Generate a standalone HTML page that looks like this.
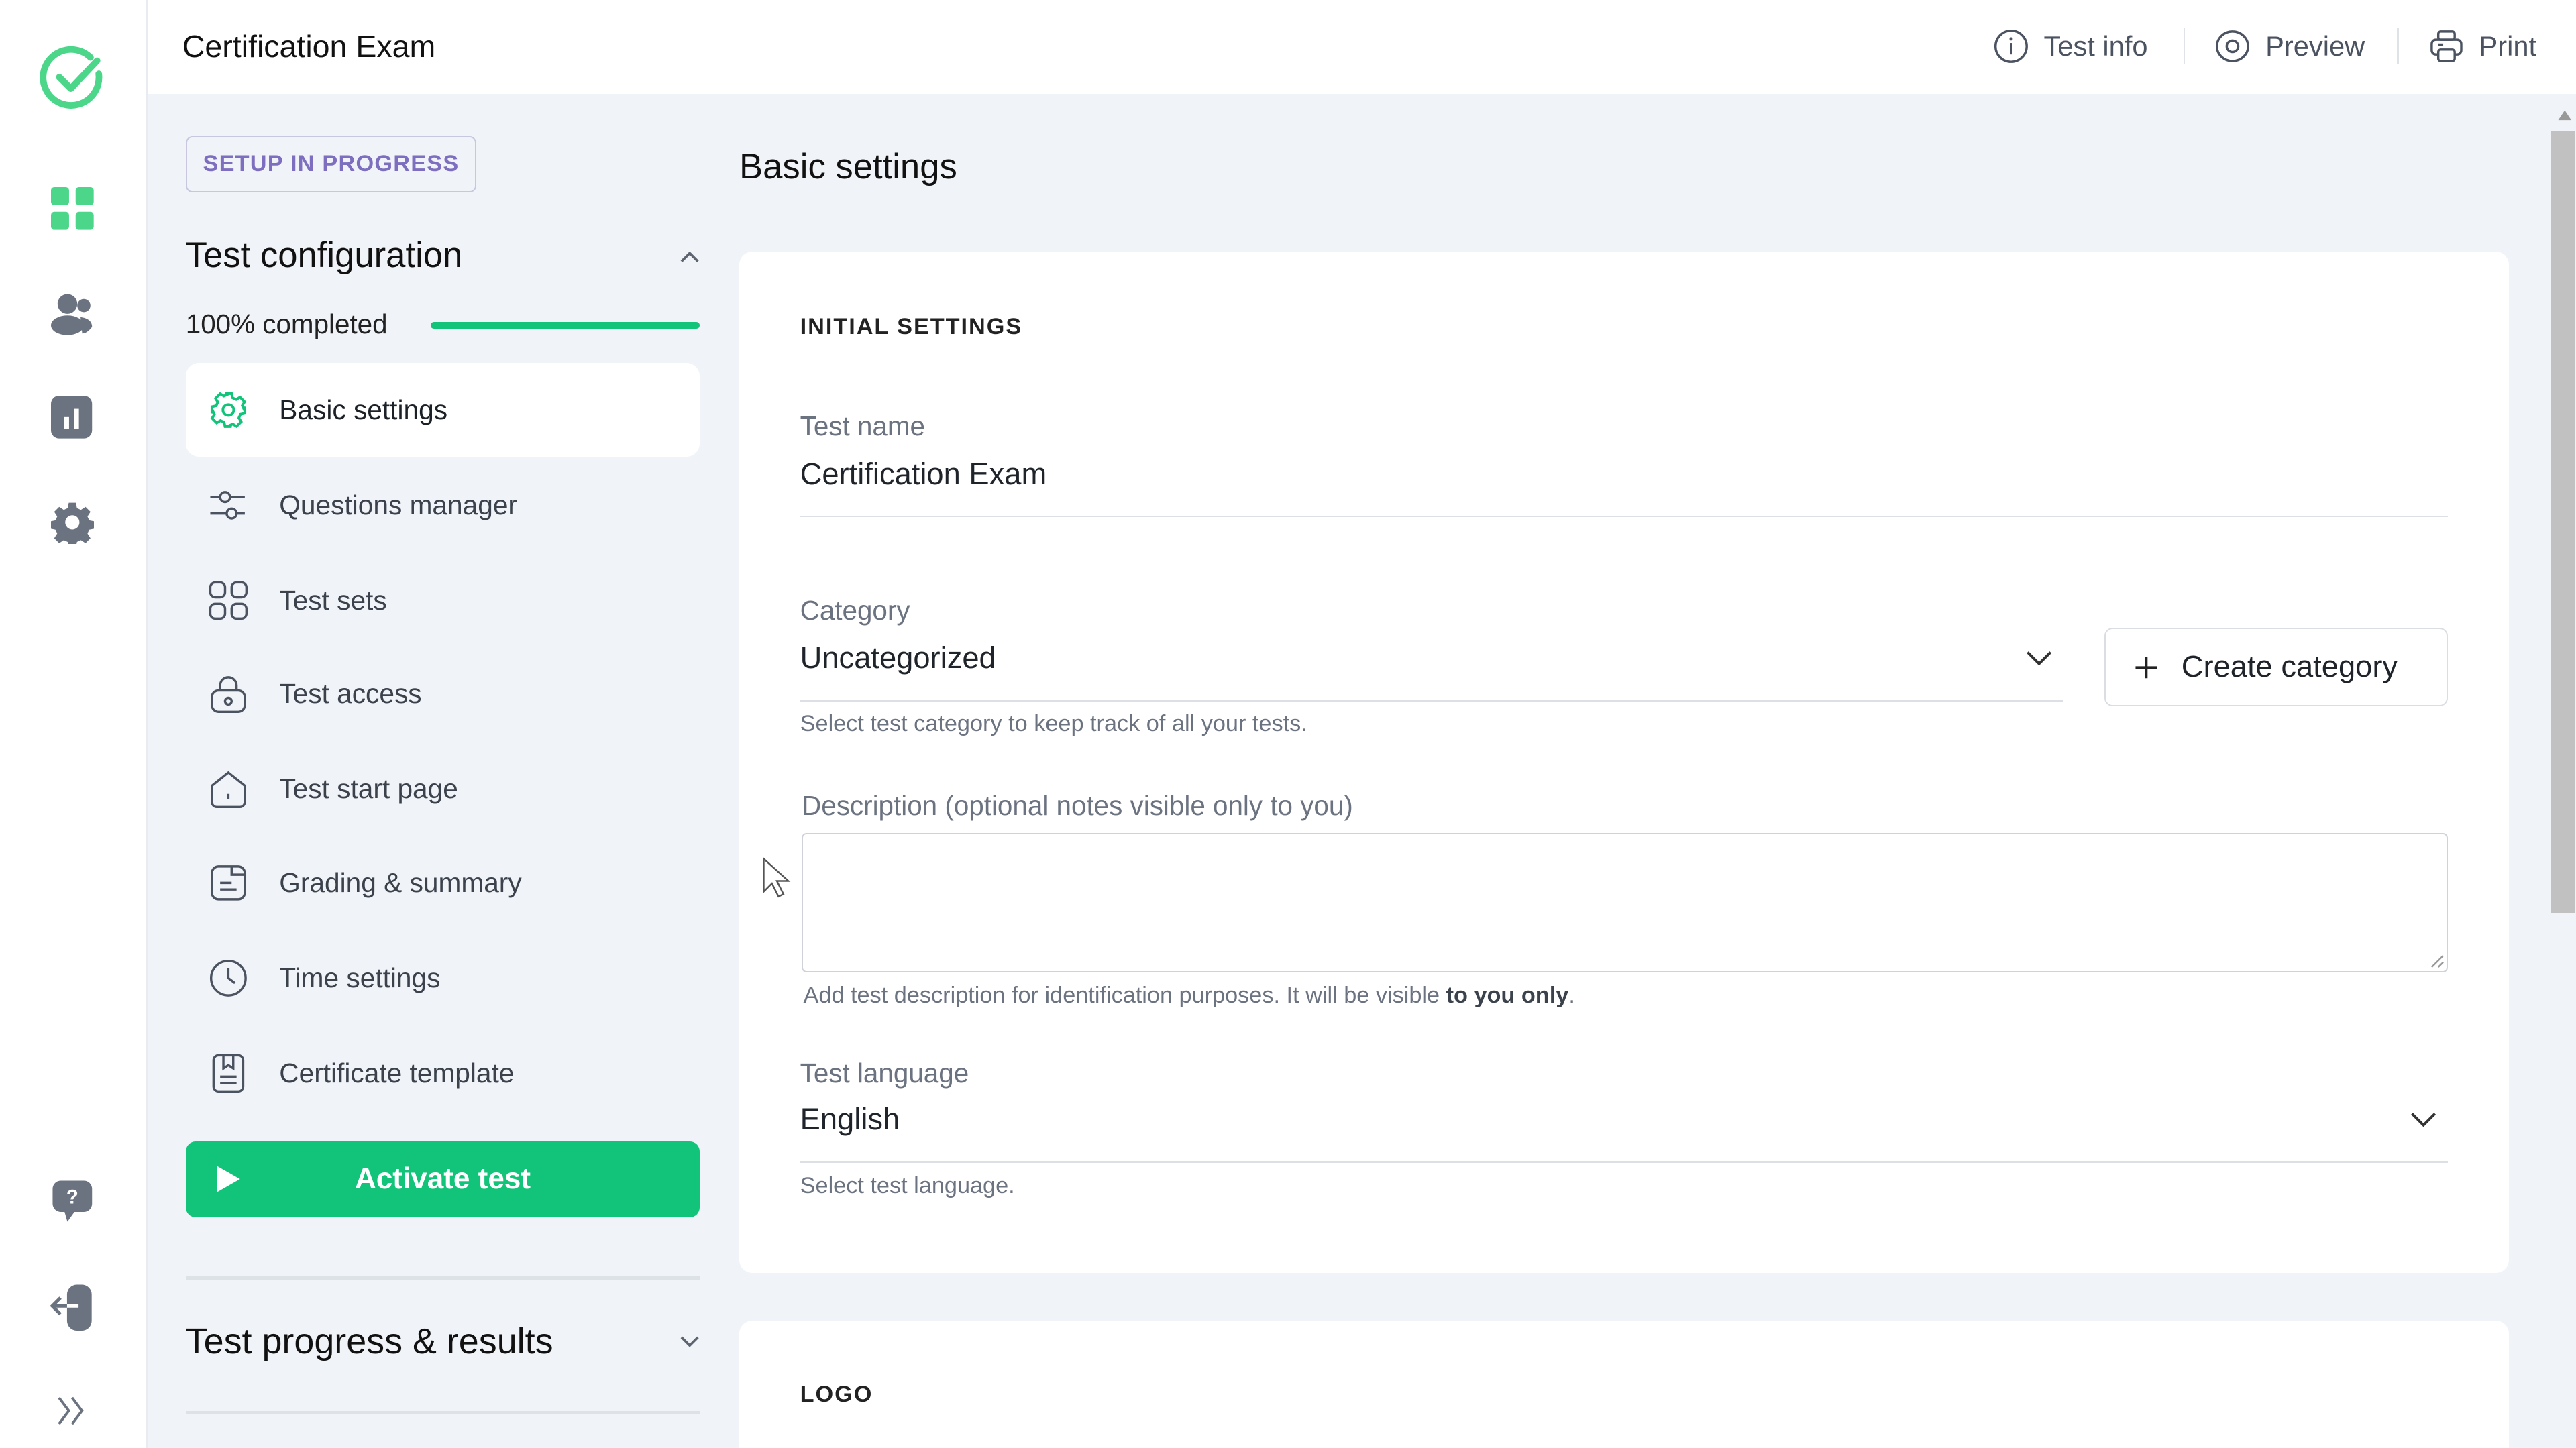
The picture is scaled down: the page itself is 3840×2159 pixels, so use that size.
<!DOCTYPE html>
<html><head><meta charset="utf-8"><style>
*{box-sizing:border-box;margin:0;padding:0}
html,body{width:3840px;height:2159px;overflow:hidden;background:#f0f3f7}
#w{width:1568px;height:882px;zoom:2.449;position:relative;font-family:"Liberation Sans",sans-serif;color:#1c2127;background:#f0f3f7;overflow:hidden}
.a{position:absolute}
.rail{left:0;top:0;width:90px;height:882px;background:#fff;border-right:1px solid #e8ebef}
.top{left:90px;top:0;width:1478px;height:57px;background:#fff}
.tr{font-size:17px;color:#4b5361;display:flex;align-items:center;gap:9px}
.sep{width:1px;height:22px;background:#dfe3e7;top:17px}
.item{left:113px;width:313px;height:57px;display:flex;align-items:center;font-size:16.6px;color:#3b424c}
.item svg{margin-left:14px;margin-right:19px}
.lbl{font-size:16.5px;color:#6b7280}
.val{font-size:18.5px;color:#1f242b}
.help{font-size:14px;color:#6b7280}
.ul{height:1px;background:#dcdfe3}
</style></head><body><div id="w">
<div class="a rail"></div>
<svg class="a" style="left:24px;top:27px" width="40" height="40" viewBox="0 0 40 40"><path d="M31 8 A17 17 0 1 0 36 18" fill="none" stroke="#4cd68a" stroke-width="4" stroke-linecap="round"/><path d="M12 20 l7 7 l16 -17" fill="none" stroke="#4cd68a" stroke-width="4" stroke-linecap="round" stroke-linejoin="round"/></svg>
<svg class="a" style="left:31px;top:114px" width="26" height="26"><rect x="0" y="0" width="11" height="11" rx="2" fill="#4cd68a"/><rect x="15" y="0" width="11" height="11" rx="2" fill="#4cd68a"/><rect x="0" y="15" width="11" height="11" rx="2" fill="#4cd68a"/><rect x="15" y="15" width="11" height="11" rx="2" fill="#4cd68a"/></svg>
<svg class="a" style="left:31px;top:178px" width="26" height="26"><circle cx="10" cy="7" r="6" fill="#6b7380"/><circle cx="20" cy="8" r="4" fill="#6b7380"/><ellipse cx="10" cy="20" rx="10" ry="6" fill="#6b7380"/><path d="M18 15 q7 1 7 6 q-3 4 -6 4z" fill="#6b7380"/></svg>
<svg class="a" style="left:31px;top:241px" width="26" height="26"><rect x="0" y="0" width="25" height="26" rx="5" fill="#6b7380"/><rect x="8" y="13" width="3" height="7" fill="#fff"/><rect x="14" y="8" width="3" height="12" fill="#fff"/></svg>
<svg class="a" style="left:31px;top:305px" width="26" height="26" viewBox="0 0 24 24"><path fill="#6b7380" d="M10 1h4l.6 3 2.2 1 2.6-1.7 2.8 2.8-1.7 2.6 1 2.2 3 .6v4l-3 .6-1 2.2 1.7 2.6-2.8 2.8-2.6-1.7-2.2 1-.6 3h-4l-.6-3-2.2-1-2.6 1.7-2.8-2.8 1.7-2.6-1-2.2-3-.6v-4l3-.6 1-2.2-1.7-2.6 2.8-2.8 2.6 1.7 2.2-1zM12 8a4 4 0 1 0 0 8a4 4 0 1 0 0-8z"/></svg>
<svg class="a" style="left:31px;top:718px" width="26" height="28"><rect x="1" y="1" width="24" height="19" rx="5" fill="#6b7380"/><path d="M8 19 l2 7 l5 -7z" fill="#6b7380"/><text x="13" y="15" font-size="12" font-weight="bold" fill="#fff" text-anchor="middle" font-family="Liberation Sans">?</text></svg>
<svg class="a" style="left:30px;top:781px" width="28" height="30"><rect x="11" y="1" width="15" height="28" rx="6" fill="#6b7380"/><path d="M3 14h15M7 9l-5 5 5 5" stroke="#6b7380" stroke-width="2" fill="none"/><path d="M11 14h7" stroke="#fff" stroke-width="2"/></svg>
<svg class="a" style="left:34px;top:849px" width="20" height="20"><path d="M2 2l6 8-6 8M10 2l6 8-6 8" stroke="#6b7380" stroke-width="1.6" fill="none"/></svg>

<div class="a top"></div>
<div class="a" style="left:111px;top:17px;font-size:19px;color:#111">Certification Exam</div>
<div class="a tr" style="left:1213px;top:17px"><svg width="22" height="22"><circle cx="11" cy="11" r="9.5" fill="none" stroke="#4b5361" stroke-width="1.4"/><path d="M11 9v7" stroke="#4b5361" stroke-width="1.5"/><circle cx="11" cy="6.5" r="1" fill="#4b5361"/></svg>Test info</div>
<div class="a sep" style="left:1329px"></div>
<div class="a tr" style="left:1348px;top:17px"><svg width="22" height="22"><ellipse cx="11" cy="11" rx="9.5" ry="9" fill="none" stroke="#4b5361" stroke-width="1.4"/><circle cx="11" cy="11" r="3.5" fill="none" stroke="#4b5361" stroke-width="1.4"/></svg>Preview</div>
<div class="a sep" style="left:1459px"></div>
<div class="a tr" style="left:1478px;top:17px"><svg width="22" height="22"><rect x="6" y="2" width="10" height="5" rx="1.5" fill="none" stroke="#4b5361" stroke-width="1.4"/><rect x="2" y="7" width="18" height="9" rx="2.5" fill="none" stroke="#4b5361" stroke-width="1.4"/><rect x="6" y="13" width="10" height="7" rx="1.5" fill="#fff" stroke="#4b5361" stroke-width="1.4"/><path d="M6 10h3" stroke="#4b5361" stroke-width="1.4"/></svg>Print</div>

<div class="a" style="left:113px;top:83px;width:177px;height:34px;border:1px solid #c9c7df;border-radius:4px;color:#7d6ebf;font-size:14px;font-weight:bold;letter-spacing:.5px;line-height:32px;text-align:center">SETUP IN PROGRESS</div>
<div class="a" style="left:113px;top:143px;font-size:21.5px;color:#111">Test configuration</div>
<svg class="a" style="left:413px;top:151px" width="14" height="10"><path d="M2 8l5-5 5 5" stroke="#5b6470" stroke-width="1.5" fill="none"/></svg>
<div class="a" style="left:113px;top:188px;font-size:16.5px;color:#222">100% completed</div>
<div class="a" style="left:262px;top:196px;width:164px;height:4px;border-radius:2px;background:#12c47a"></div>

<div class="a item" style="top:221px;background:#fff;border-radius:8px;color:#1c2127"><svg width="24" height="24" viewBox="0 0 24 24"><path fill="none" stroke="#12c47a" stroke-width="1.6" d="M10 2h4l.6 2.6 2.2 1 2.3-1.4 2.8 2.8-1.4 2.3 1 2.2L22 10v4l-2.6.6-1 2.2 1.4 2.3-2.8 2.8-2.3-1.4-2.2 1L14 22h-4l-.6-2.6-2.2-1-2.3 1.4-2.8-2.8 1.4-2.3-1-2.2L2 14v-4l2.6-.6 1-2.2-1.4-2.3 2.8-2.8 2.3 1.4 2.2-1z"/><circle cx="12" cy="12" r="3.3" fill="none" stroke="#12c47a" stroke-width="1.6"/></svg>Basic settings</div>
<div class="a item" style="top:279px"><svg width="24" height="24"><circle cx="10" cy="7" r="3" fill="none" stroke="#4b5361" stroke-width="1.4"/><circle cx="14" cy="17" r="3" fill="none" stroke="#4b5361" stroke-width="1.4"/><path d="M1 7h6M13 7h9M1 17h10M17 17h5" stroke="#4b5361" stroke-width="1.4"/></svg>Questions manager</div>
<div class="a item" style="top:337px"><svg width="24" height="24" fill="none" stroke="#4b5361" stroke-width="1.4"><rect x="1" y="1" width="9" height="9" rx="3"/><rect x="14" y="1" width="9" height="9" rx="3"/><rect x="1" y="14" width="9" height="9" rx="3"/><rect x="14" y="14" width="9" height="9" rx="3"/></svg>Test sets</div>
<div class="a item" style="top:394px"><svg width="24" height="24" fill="none" stroke="#4b5361" stroke-width="1.4"><path d="M7 10V7a5 5 0 0 1 10 0v3"/><rect x="2" y="10" width="20" height="13" rx="4"/><circle cx="12" cy="16.5" r="2"/></svg>Test access</div>
<div class="a item" style="top:452px"><svg width="24" height="24" fill="none" stroke="#4b5361" stroke-width="1.4"><path d="M2 10l10-8 10 8v10a3 3 0 0 1-3 3H5a3 3 0 0 1-3-3z"/><path d="M12 15v3"/></svg>Test start page</div>
<div class="a item" style="top:509px"><svg width="24" height="24" fill="none" stroke="#4b5361" stroke-width="1.4"><rect x="2" y="2" width="20" height="20" rx="4"/><path d="M7 12h7M7 16h10M14 2v5h8"/></svg>Grading &amp; summary</div>
<div class="a item" style="top:567px"><svg width="24" height="24" fill="none" stroke="#4b5361" stroke-width="1.4"><circle cx="12" cy="12" r="10.5"/><path d="M12 6v6l4 3"/></svg>Time settings</div>
<div class="a item" style="top:625px"><svg width="24" height="24" fill="none" stroke="#4b5361" stroke-width="1.4"><rect x="3" y="1" width="18" height="22" rx="3"/><path d="M9 1v8l3-2 3 2V1M7 14h10M7 18h10"/></svg>Certificate template</div>

<div class="a" style="left:113px;top:695px;width:313px;height:46px;background:#12c47a;border-radius:6px;color:#fff;font-size:18px;font-weight:bold;text-align:center;line-height:46px">Activate test</div>
<svg class="a" style="left:131px;top:709px" width="16" height="18"><path d="M1 1l14 8-14 8z" fill="#fff"/></svg>
<div class="a ul" style="left:113px;top:777px;width:313px;height:2px;background:#dde2e6"></div>
<div class="a" style="left:113px;top:804px;font-size:22px;color:#111">Test progress &amp; results</div>
<svg class="a" style="left:413px;top:812px" width="14" height="10"><path d="M2 2l5 5 5-5" stroke="#5b6470" stroke-width="1.5" fill="none"/></svg>
<div class="a ul" style="left:113px;top:859px;width:313px;height:2px;background:#dde2e6"></div>

<div class="a" style="left:450px;top:89px;font-size:21.5px;color:#111">Basic settings</div>
<div class="a" style="left:450px;top:153px;width:1077px;height:622px;background:#fff;border-radius:8px"></div>
<div class="a" style="left:487px;top:191px;font-size:14px;font-weight:bold;letter-spacing:.8px;color:#222">INITIAL SETTINGS</div>
<div class="a lbl" style="left:487px;top:250px">Test name</div>
<div class="a val" style="left:487px;top:278px">Certification Exam</div>
<div class="a ul" style="left:487px;top:314px;width:1003px"></div>
<div class="a lbl" style="left:487px;top:362px">Category</div>
<div class="a val" style="left:487px;top:390px">Uncategorized</div>
<svg class="a" style="left:1233px;top:396px" width="16" height="10"><path d="M1 1l7 7 7-7" stroke="#333" stroke-width="1.6" fill="none"/></svg>
<div class="a ul" style="left:487px;top:426px;width:769px"></div>
<div class="a" style="left:1281px;top:382px;width:209px;height:48px;border:1px solid #dadde2;border-radius:5px;font-size:18.5px;color:#1f242b;line-height:46px;padding-left:46px">Create category</div>
<svg class="a" style="left:1299px;top:399px" width="15" height="15"><path d="M7.5 1v13M1 7.5h13" stroke="#222" stroke-width="1.6"/></svg>
<div class="a help" style="left:487px;top:433px">Select test category to keep track of all your tests.</div>
<div class="a lbl" style="left:488px;top:481px">Description (optional notes visible only to you)</div>
<div class="a" style="left:488px;top:507px;width:1002px;height:85px;border:1px solid #cfd3d9;border-radius:3px"></div>
<svg class="a" style="left:1478px;top:580px" width="10" height="10"><path d="M9 2L2 9M9 6L6 9" stroke="#999" stroke-width="1"/></svg>
<div class="a help" style="left:489px;top:598px">Add test description for identification purposes. It will be visible <b style="color:#3b424c">to you only</b>.</div>
<div class="a lbl" style="left:487px;top:644px">Test language</div>
<div class="a val" style="left:487px;top:671px">English</div>
<svg class="a" style="left:1467px;top:677px" width="16" height="10"><path d="M1 1l7 7 7-7" stroke="#333" stroke-width="1.6" fill="none"/></svg>
<div class="a ul" style="left:487px;top:707px;width:1003px"></div>
<div class="a help" style="left:487px;top:714px">Select test language.</div>
<div class="a" style="left:450px;top:804px;width:1077px;height:100px;background:#fff;border-radius:8px"></div>
<div class="a" style="left:487px;top:841px;font-size:14px;font-weight:bold;letter-spacing:.8px;color:#222">LOGO</div>

<div class="a" style="left:1552px;top:57px;width:16px;height:825px;background:#f0f3f7"></div>
<svg class="a" style="left:1556px;top:66px" width="10" height="8"><path d="M5 1l4 6H1z" fill="#999"/></svg>
<div class="a" style="left:1553px;top:80px;width:14px;height:476px;background:#c1c1c1"></div>
<svg class="a" style="left:464px;top:522px" width="18" height="26"><path d="M1 1v20l5-5 4 8 3-1.5-4-8h7z" fill="#fff" stroke="#555" stroke-width="1"/></svg>
</div></body></html>
